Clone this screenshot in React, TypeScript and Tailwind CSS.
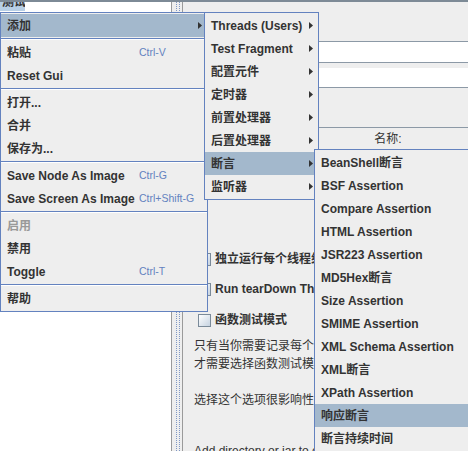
import React from "react";

type Entry =
  | { label: string; shortcut?: string; arrow?: boolean; active?: boolean; disabled?: boolean }
  | "sep";

const mainMenu: Entry[] = [
  { label: "添加", arrow: true, active: true },
  "sep",
  { label: "粘贴", shortcut: "Ctrl-V" },
  { label: "Reset Gui" },
  "sep",
  { label: "打开..." },
  { label: "合并" },
  { label: "保存为..." },
  "sep",
  { label: "Save Node As Image", shortcut: "Ctrl-G" },
  { label: "Save Screen As Image", shortcut: "Ctrl+Shift-G" },
  "sep",
  { label: "启用", disabled: true },
  { label: "禁用" },
  { label: "Toggle", shortcut: "Ctrl-T" },
  "sep",
  { label: "帮助" },
];

const addMenu: Entry[] = [
  { label: "Threads (Users)", arrow: true },
  { label: "Test Fragment", arrow: true },
  { label: "配置元件", arrow: true },
  { label: "定时器", arrow: true },
  { label: "前置处理器", arrow: true },
  { label: "后置处理器", arrow: true },
  { label: "断言", arrow: true, active: true },
  { label: "监听器", arrow: true },
];

const assertMenu: Entry[] = [
  { label: "BeanShell断言" },
  { label: "BSF Assertion" },
  { label: "Compare Assertion" },
  { label: "HTML Assertion" },
  { label: "JSR223 Assertion" },
  { label: "MD5Hex断言" },
  { label: "Size Assertion" },
  { label: "SMIME Assertion" },
  { label: "XML Schema Assertion" },
  { label: "XML断言" },
  { label: "XPath Assertion" },
  { label: "响应断言", active: true },
  { label: "断言持续时间" },
];

const Arrow = () => (
  <svg width="4" height="7" viewBox="0 0 4 7" className="shrink-0">
    <path d="M0 0L4 3.5L0 7Z" fill="#333333" />
  </svg>
);

function Menu({
  entries,
  labelWidth,
  padLeft,
  className,
}: {
  entries: Entry[];
  labelWidth?: string;
  padLeft: string;
  className: string;
}) {
  return (
    <div
      className={`absolute bg-[#eeeeee] border border-[#6382bf] pt-[1px] pb-[1px] ${className}`}
    >
      {entries.map((e, i) => {
        if (e === "sep") {
          return (
            <div key={i} className="h-[4px] flex flex-col justify-center">
              <div className="h-[1px] bg-[#6382bf]" />
              <div className="h-[1px] bg-white" />
            </div>
          );
        }
        return (
          <div
            key={i}
            className={`h-[23px] flex items-center pr-[5px] whitespace-nowrap ${padLeft} ${
              e.active ? "bg-[#a3b8cc]" : ""
            }`}
          >
            <span
              className={`${labelWidth ?? "flex-1"} text-[12px] font-bold ${
                e.disabled ? "text-[#999999]" : "text-[#333333]"
              }`}
            >
              {e.label}
            </span>
            {e.shortcut && (
              <span className="flex-1 text-[10.5px] text-[#6382bf]">{e.shortcut}</span>
            )}
            {labelWidth && !e.shortcut && <span className="flex-1" />}
            {e.arrow && <Arrow />}
          </div>
        );
      })}
    </div>
  );
}

const Check = () => (
  <span className="w-[13px] h-[13px] shrink-0 border border-[#7a8a99] bg-linear-to-br from-white to-[#c6d3e1]" />
);

export default function App() {
  return (
    <div className="relative w-[468px] h-[451px] overflow-hidden bg-[#eeeeee] font-['Liberation_Sans','Noto_Sans_CJK_SC',sans-serif] text-[#333333]">
      <div className="flex flex-col h-full">
        {/* top strip */}
        <div className="h-[2px] bg-[#7d8a96] shrink-0" />

        <div className="flex flex-1 min-h-0">
          {/* tree */}
          <div className="w-[172px] shrink-0 bg-white border-r border-[#9a9a9a]">
            <div className="w-[25px] h-[9px] bg-[#b8cfe5] overflow-hidden">
              <div className="-mt-[8px] pl-[2px] text-[12px] leading-[16px] font-bold whitespace-nowrap">
                测试计划
              </div>
            </div>
          </div>

          {/* splitter */}
          <div className="w-[11px] shrink-0 flex justify-center border-r border-[#9a9a9a] pl-[1px]">
            <div className="w-[4px] h-full border-x border-dotted border-[#7f97c4]" />
          </div>

          {/* right pane */}
          <div className="flex-1 min-w-0 flex flex-col overflow-hidden">
            <div className="h-[39px] shrink-0" />
            <div className="h-[22px] shrink-0 flex items-center">
              <span className="w-[56px] pl-[11px] text-[12px]">名称：</span>
              <div className="flex-1 h-full bg-white border-y border-[#8c99a6]" />
            </div>
            <div className="h-[5px] shrink-0" />
            <div className="h-[20px] shrink-0 flex items-center">
              <span className="w-[56px] pl-[11px] text-[12px]">注释：</span>
              <div className="flex-1 h-full bg-white border-b border-[#8c99a6]" />
            </div>
            <div className="h-[39px] shrink-0" />
            <div className="h-[23px] shrink-0 flex items-center border-t border-[#8c99a6]">
              <span className="ml-[126px] w-[158px] shrink-0 text-center text-[12px]">名称:</span>
              <span className="w-[158px] shrink-0 text-center text-[12px]">值</span>
            </div>
            <div className="h-[99px] shrink-0" />

            <div className="pl-[15px] flex flex-col text-[12px] font-bold whitespace-nowrap">
              <div className="h-[20px] flex items-center gap-[4px]">
                <Check />
                <span>独立运行每个线程组（例如在一个组运行结束后启动下一个）</span>
              </div>
              <div className="h-[10px]" />
              <div className="h-[20px] flex items-center gap-[4px]">
                <Check />
                <span>Run tearDown Thread Groups after shutdown of main threads</span>
              </div>
              <div className="h-[11px]" />
              <div className="h-[20px] flex items-center gap-[4px]">
                <Check />
                <span>函数测试模式</span>
              </div>
            </div>

            <div className="pl-[11px] pt-[7px] text-[12px] leading-[18px] whitespace-nowrap">
              <div>只有当你需要记录每个请求从服务器取得的数据到文件时</div>
              <div>才需要选择函数测试模式。</div>
              <div>&nbsp;</div>
              <div>选择这个选项很影响性能。</div>
              <div className="h-[33px]" />
              <div>Add directory or jar to classpath</div>
            </div>
          </div>
        </div>
      </div>

      {/* popup menus */}
      <Menu
        entries={mainMenu}
        labelWidth="w-[132px] shrink-0"
        padLeft="pl-[6px]"
        className="left-0 top-[12px] w-[208px]"
      />
      <Menu entries={addMenu} padLeft="pl-[6px]" className="left-[204px] top-[12px] w-[115px]" />
      <Menu entries={assertMenu} padLeft="pl-[6px]" className="left-[314px] top-[149px] w-[170px]" />
    </div>
  );
}
